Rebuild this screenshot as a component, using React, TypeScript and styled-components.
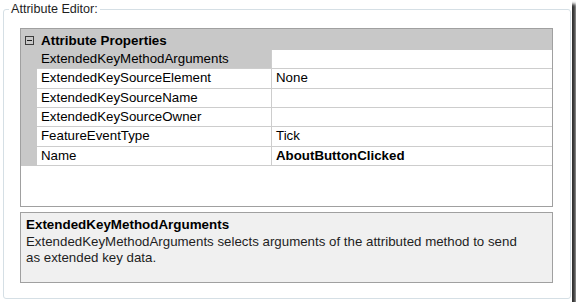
import styled, { createGlobalStyle } from "styled-components"

const GlobalStyle = createGlobalStyle`
    html, body{
        margin: 0;
        padding: 0;
        background: #fff;
    }
    body{
        font-family: "Liberation Sans", Arial, sans-serif;
        font-size: 13.3px;
        color: #000;
    }
`

const rows = [
    { name: "ExtendedKeyMethodArguments", value: "", selected: true },
    { name: "ExtendedKeySourceElement", value: "None" },
    { name: "ExtendedKeySourceName", value: "" },
    { name: "ExtendedKeySourceOwner", value: "" },
    { name: "FeatureEventType", value: "Tick" },
    { name: "Name", value: "AboutButtonClicked", bold: true },
]

export default function App(){
    return(
        <Frame>
            <GlobalStyle />
            <Group>
                <legend>Attribute Editor:</legend>
                <Grid>
                    <Category>
                        <Gutter>
                            <svg width="9" height="9" viewBox="0 0 9 9" xmlns="http://www.w3.org/2000/svg">
                                <rect x="0.5" y="0.5" width="8" height="8" fill="none" stroke="#3c3c3c"/>
                                <path d="M2 4.5h5" stroke="#1e1e1e" strokeWidth="1"/>
                            </svg>
                        </Gutter>
                        <span>Attribute Properties</span>
                    </Category>
                    {rows.map(r => (
                        <Row key={r.name}>
                            <Gutter />
                            <NameCell $selected={r.selected}>{r.name}</NameCell>
                            <ValueCell $bold={r.bold}>{r.value}</ValueCell>
                        </Row>
                    ))}
                </Grid>
                <Description>
                    <h4>ExtendedKeyMethodArguments</h4>
                    <p>ExtendedKeyMethodArguments selects arguments of the attributed method to send as extended key data.</p>
                </Description>
            </Group>
        </Frame>
    )
}

const Frame = styled.div`
    width: 572px;
    height: 302px;
    box-sizing: border-box;
    background: #fff;
    padding: 2px 0 0 3px;
    box-shadow: 4px 4px 3px rgba(0, 0, 0, 0.8);
`

const Group = styled.fieldset`
    margin: 0;
    width: 568px;
    height: 297px;
    box-sizing: border-box;
    border: 1px solid #d5dfe5;
    border-radius: 3px;
    padding: 12px 17px 0 16px;
    legend{
        padding: 0 2px;
        margin-left: -11px;
        font-size: 12.6px;
        line-height: 14px;
        color: #1e1e1e;
    }
`

const Grid = styled.div`
    height: 179px;
    box-sizing: border-box;
    border: 1px solid #a0a0a0;
    background: #fff;
`

const Category = styled.div`
    display: flex;
    align-items: center;
    height: 21px;
    background: #c8c8c8;
    font-weight: 700;
    font-size: 13.4px;
    span{
        padding-left: 4px;
        padding-top: 1px;
    }
`

const Gutter = styled.div`
    width: 16px;
    align-self: stretch;
    background: #c8c8c8;
    display: flex;
    align-items: center;
    justify-content: center;
    padding-top: 1px;
    box-sizing: border-box;
`

const Row = styled.div`
    display: flex;
    height: 19.33px;
`

const NameCell = styled.div<{ $selected?: boolean }>`
    width: 235px;
    box-sizing: border-box;
    padding-left: 4px;
    line-height: 18px;
    border-right: 1px solid #cdcdcd;
    border-bottom: 1px solid #cdcdcd;
    background: ${p => p.$selected ? "#c8c8c8" : "#fff"};
    white-space: nowrap;
    overflow: hidden;
`

const ValueCell = styled.div<{ $bold?: boolean }>`
    flex: 1;
    padding-left: 4px;
    line-height: 18px;
    border-bottom: 1px solid #cdcdcd;
    font-weight: ${p => p.$bold ? 700 : 400};
`

const Description = styled.div`
    margin-top: 5px;
    height: 71px;
    box-sizing: border-box;
    border: 1px solid #a0a0a0;
    background: #f0f0f0;
    padding: 4px 5px;
    h4{
        margin: 0 0 1px;
        font-size: 13.4px;
        line-height: 16px;
        font-weight: 700;
    }
    p{
        margin: 0;
        max-width: 496px;
        line-height: 16px;
        color: #1e1e1e;
    }
`
